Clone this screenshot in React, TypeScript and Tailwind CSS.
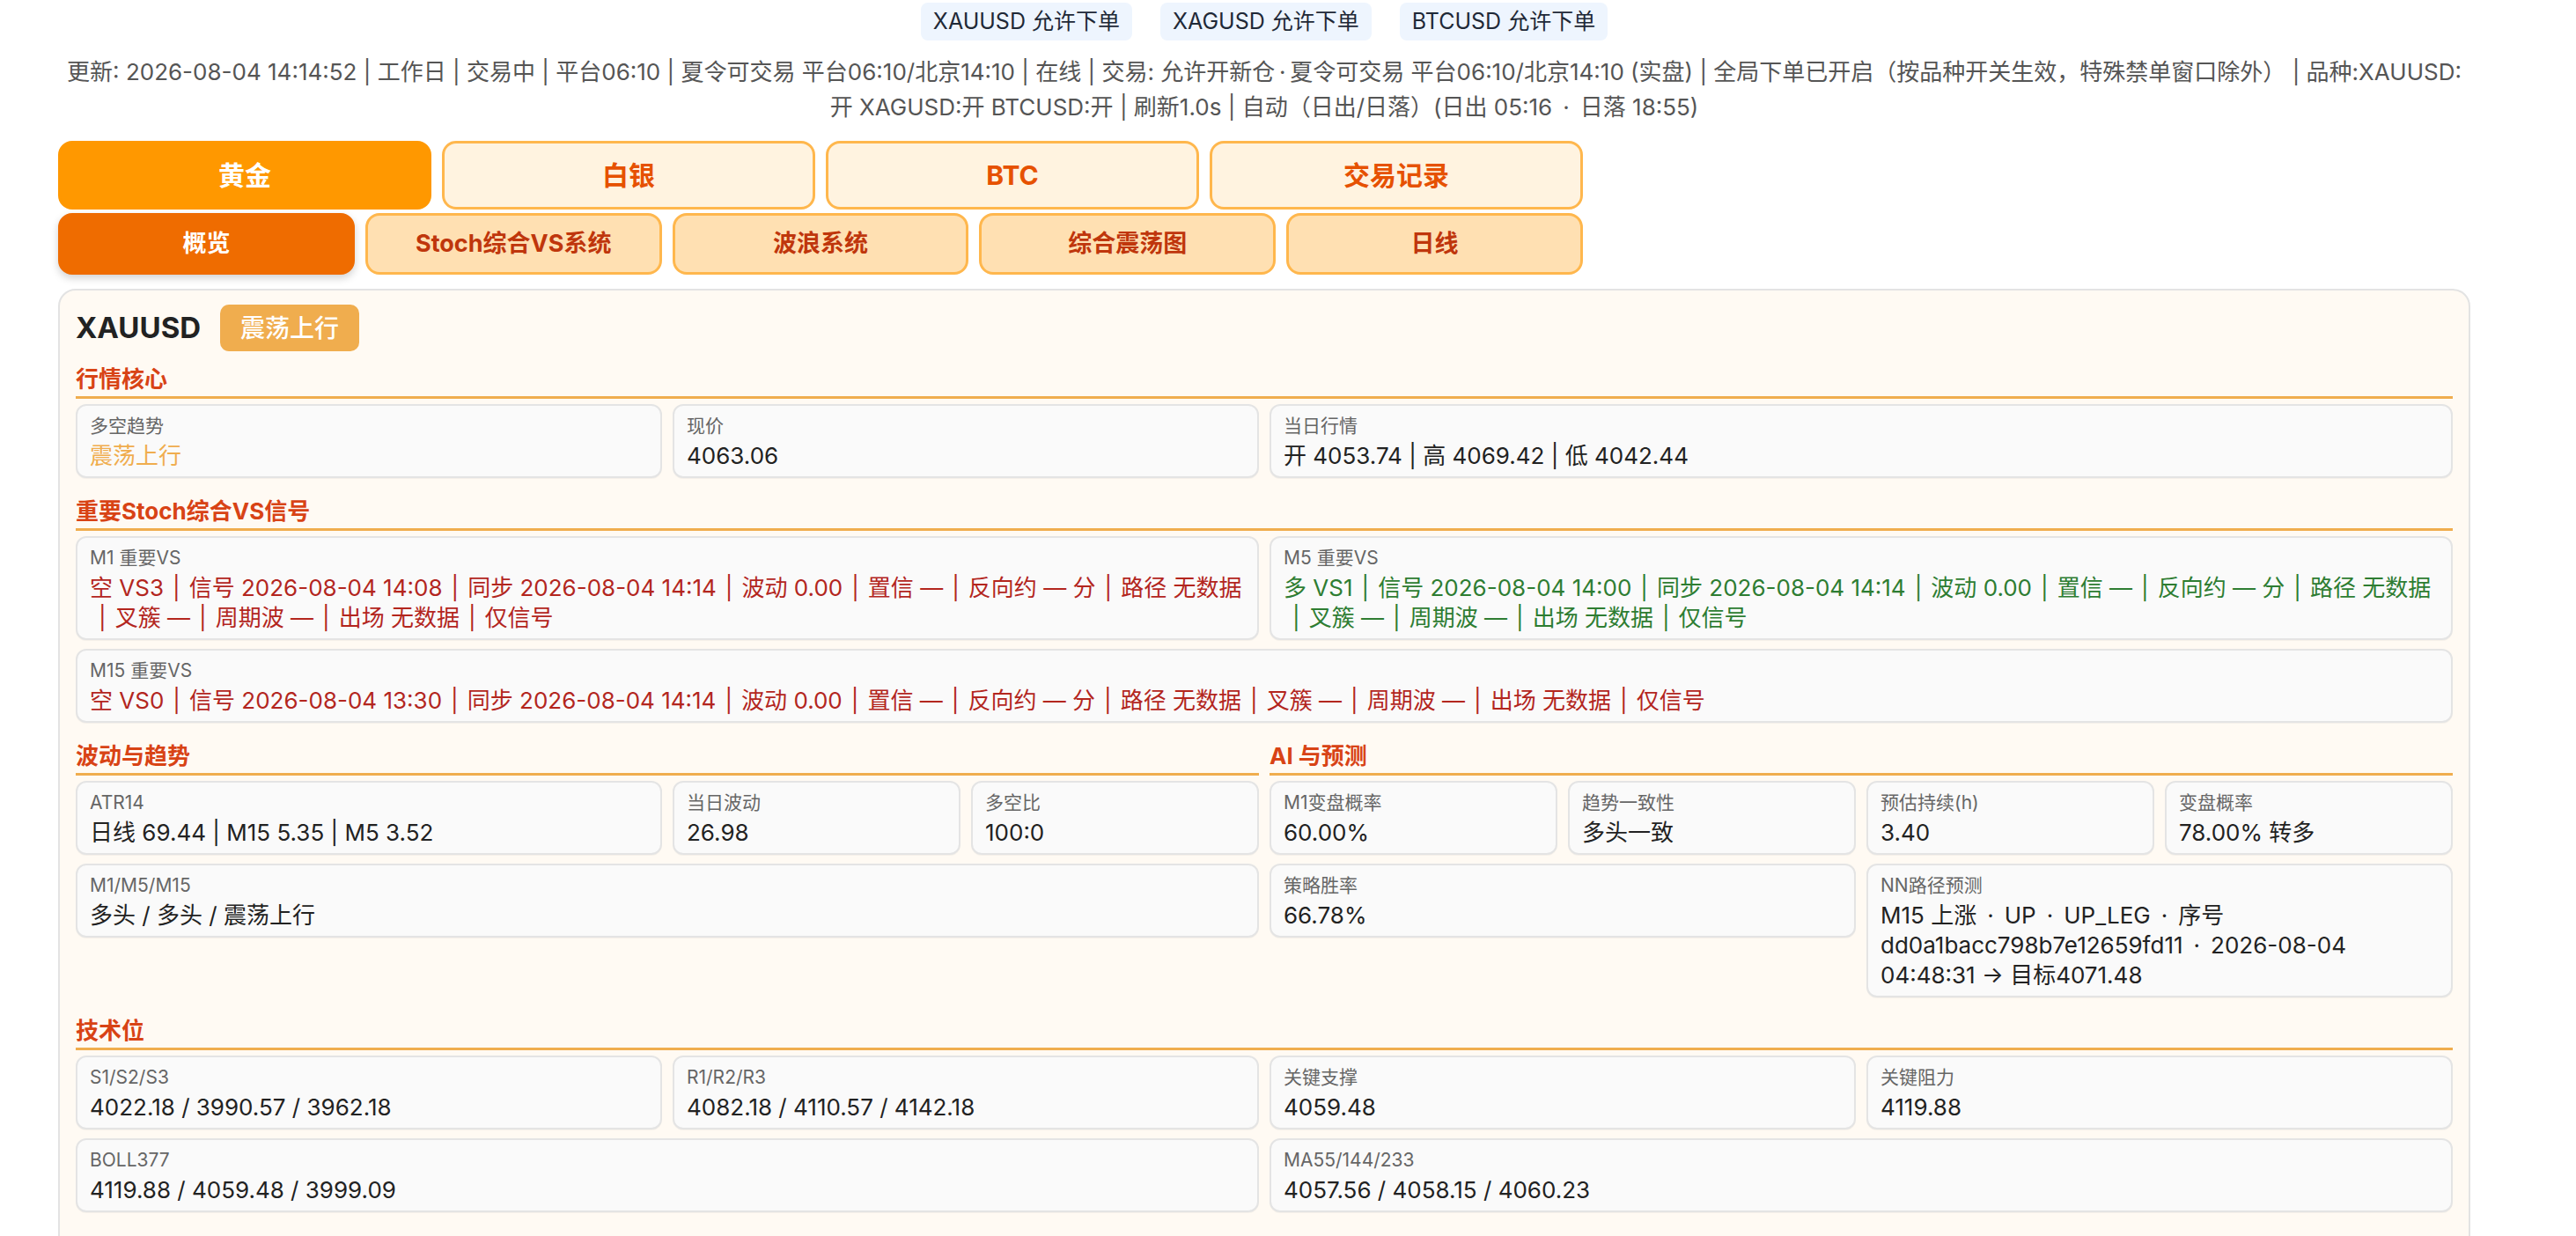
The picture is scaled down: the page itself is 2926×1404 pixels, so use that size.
import React from "react";

function Cell({
  label,
  children,
  span = "",
  valueClass = "text-[#222]",
}: {
  label: string;
  children: React.ReactNode;
  span?: string;
  valueClass?: string;
}) {
  return (
    <div
      className={`${span} rounded-[12px] border-2 border-[#e4e4e4] bg-[#fafafa] px-[14px] pt-[10px] pb-[6px] shadow-[0_1px_0_rgba(0,0,0,0.04)]`}
    >
      <div className="mb-[4px] text-[21px] leading-[26px] text-[#666]">{label}</div>
      <div className={`text-[26px] leading-[34px] ${valueClass}`}>{children}</div>
    </div>
  );
}

function Heading({ children, first = false }: { children: React.ReactNode; first?: boolean }) {
  return (
    <div
      className={`${first ? "mt-[16px]" : "mt-[22px]"} mb-[6px] border-b-[3px] border-[#f0ad4e] pb-[3px] text-[26px] font-bold leading-[32px] text-[#d84315]`}
    >
      {children}
    </div>
  );
}

function Signal({ parts }: { parts: string[] }) {
  return (
    <>
      {parts.map((p, i) => (
        <React.Fragment key={i}>
          {i > 0 && <span className="mx-[10px] inline-block">|</span>}
          {p}
        </React.Fragment>
      ))}
    </>
  );
}

export default function App() {
  const topTabs = ["黄金", "白银", "BTC", "交易记录"];
  const subTabs = ["概览", "Stoch综合VS系统", "波浪系统", "综合震荡图", "日线"];
  const tail = ["波动 0.00", "置信 —", "反向约 — 分", "路径 无数据", "叉簇 —", "周期波 —", "出场 无数据", "仅信号"];
  const m1 = ["空 VS3", "信号 2026-08-04 14:08", "同步 2026-08-04 14:14", ...tail];
  const m5 = ["多 VS1", "信号 2026-08-04 14:00", "同步 2026-08-04 14:14", ...tail];
  const m15 = ["空 VS0", "信号 2026-08-04 13:30", "同步 2026-08-04 14:14", ...tail];
  const dot = " \u2009·\u2009 ";

  return (
    <div className="min-h-screen bg-white font-['Inter','Noto_Sans_CJK_SC',sans-serif] text-[#222]">
      <div className="pl-[66px] pt-[3px]">
        <div className="w-[2740px]">
          {/* order chips */}
          <div className="flex justify-center gap-[32px]">
            {["XAUUSD 允许下单", "XAGUSD 允许下单", "BTCUSD 允许下单"].map((t) => (
              <div
                key={t}
                className="flex h-[43px] items-center rounded-[8px] bg-[#eef5fe] px-[14px] text-[25px] text-[#1f2937]"
              >
                {t}
              </div>
            ))}
          </div>

          {/* status */}
          <div className="mt-[16px] text-center text-[26px] leading-[40px] text-[#555]">
            <div className="h-[40px] whitespace-nowrap">
              {"更新: 2026-08-04 14:14:52 | 工作日 | 交易中 | 平台06:10 | 夏令可交易 平台06:10/北京14:10 | 在线 | 交易: 允许开新仓\u2009·\u2009夏令可交易 平台06:10/北京14:10 (实盘) | 全局下单已开启（按品种开关生效，特殊禁单窗口除外） | 品种:XAUUSD:"}
            </div>
            <div className="h-[40px] whitespace-nowrap">
              {`开 XAGUSD:开 BTCUSD:开 | 刷新1.0s | 自动（日出/日落）(日出 05:16${dot}日落 18:55)`}
            </div>
          </div>

          {/* tabs */}
          <div className="mt-[18px] w-[1732px]">
            <div className="grid grid-cols-4 gap-[12px]">
              {topTabs.map((t, i) => (
                <div
                  key={t}
                  className={
                    i === 0
                      ? "flex h-[78px] items-center justify-center rounded-[16px] border-[3px] border-[#ff9800] bg-[#ff9800] text-[30px] font-bold text-white"
                      : "flex h-[78px] items-center justify-center rounded-[16px] border-[3px] border-[#ffb74d] bg-[#fff3e0] text-[30px] font-bold text-[#e65100]"
                  }
                >
                  {t}
                </div>
              ))}
            </div>
            <div className="mt-[4px] grid grid-cols-5 gap-[12px]">
              {subTabs.map((t, i) => (
                <div
                  key={t}
                  className={
                    i === 0
                      ? "flex h-[70px] items-center justify-center rounded-[16px] border-[3px] border-[#ef6c00] bg-[#ef6c00] text-[27px] font-bold text-white shadow-[0_4px_10px_rgba(0,0,0,0.18)]"
                      : "flex h-[70px] items-center justify-center rounded-[16px] border-[3px] border-[#ffb74d] bg-[#ffe0b2] text-[27px] font-bold text-[#bf360c]"
                  }
                >
                  {t}
                </div>
              ))}
            </div>
          </div>

          {/* card */}
          <div className="mt-[16px] rounded-[20px] border-2 border-[#e3e3e3] bg-[#fffaf3] px-[18px] pt-[16px] pb-[60px]">
            <div className="flex items-center gap-[22px]">
              <div className="text-[33px] font-bold text-[#222]">XAUUSD</div>
              <div className="flex h-[53px] items-center rounded-[10px] bg-[#f0ad4e] px-[23px] text-[28px] font-medium text-white">
                震荡上行
              </div>
            </div>

            <Heading first>行情核心</Heading>
            <div className="grid grid-cols-4 items-start gap-x-[12px] gap-y-[10px]">
              <Cell label="多空趋势" valueClass="text-[#f0ad4e]">
                震荡上行
              </Cell>
              <Cell label="现价">4063.06</Cell>
              <Cell label="当日行情" span="col-span-2">
                开 4053.74 | 高 4069.42 | 低 4042.44
              </Cell>
            </div>

            <Heading>重要Stoch综合VS信号</Heading>
            <div className="grid grid-cols-4 items-start gap-x-[12px] gap-y-[10px]">
              <Cell label="M1 重要VS" span="col-span-2" valueClass="text-[#b3261e]">
                <Signal parts={m1} />
              </Cell>
              <Cell label="M5 重要VS" span="col-span-2" valueClass="text-[#2e7d32]">
                <Signal parts={m5} />
              </Cell>
              <Cell label="M15 重要VS" span="col-span-4" valueClass="text-[#b3261e]">
                <Signal parts={m15} />
              </Cell>
            </div>

            <div className="grid grid-cols-2 items-start gap-x-[12px]">
              <div>
                <Heading>波动与趋势</Heading>
                <div className="grid grid-cols-4 items-start gap-x-[12px] gap-y-[10px]">
                  <Cell label="ATR14" span="col-span-2">
                    日线 69.44 | M15 5.35 | M5 3.52
                  </Cell>
                  <Cell label="当日波动">26.98</Cell>
                  <Cell label="多空比">100:0</Cell>
                  <Cell label="M1/M5/M15" span="col-span-4">
                    多头 / 多头 / 震荡上行
                  </Cell>
                </div>
              </div>
              <div>
                <Heading>AI 与预测</Heading>
                <div className="grid grid-cols-4 items-start gap-x-[12px] gap-y-[10px]">
                  <Cell label="M1变盘概率">60.00%</Cell>
                  <Cell label="趋势一致性">多头一致</Cell>
                  <Cell label="预估持续(h)">3.40</Cell>
                  <Cell label="变盘概率">78.00% 转多</Cell>
                  <Cell label="策略胜率" span="col-span-2">
                    66.78%
                  </Cell>
                  <Cell label="NN路径预测" span="col-span-2">
                    {`M15 上涨${dot}UP${dot}UP_LEG${dot}序号 dd0a1bacc798b7e12659fd11${dot}2026-08-04 04:48:31 → 目标4071.48`}
                  </Cell>
                </div>
              </div>
            </div>

            <Heading>技术位</Heading>
            <div className="grid grid-cols-4 items-start gap-x-[12px] gap-y-[10px]">
              <Cell label="S1/S2/S3">4022.18 / 3990.57 / 3962.18</Cell>
              <Cell label="R1/R2/R3">4082.18 / 4110.57 / 4142.18</Cell>
              <Cell label="关键支撑">4059.48</Cell>
              <Cell label="关键阻力">4119.88</Cell>
              <Cell label="BOLL377" span="col-span-2">
                4119.88 / 4059.48 / 3999.09
              </Cell>
              <Cell label="MA55/144/233" span="col-span-2">
                4057.56 / 4058.15 / 4060.23
              </Cell>
            </div>
          </div>
        </div>
      </div>
    </div>
  );
}
